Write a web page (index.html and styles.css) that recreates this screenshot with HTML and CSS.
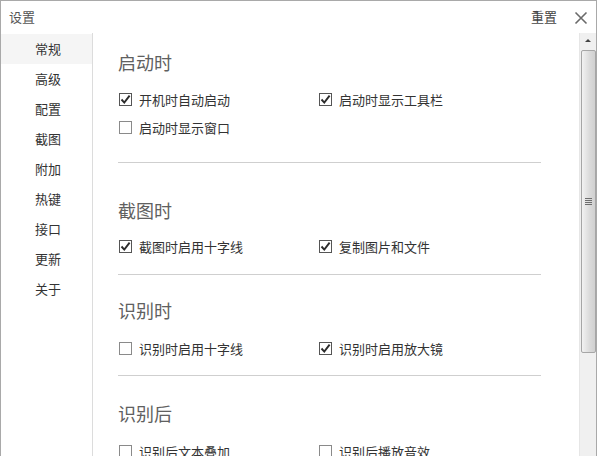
FILE: index.html
```html
<!DOCTYPE html>
<html lang="zh">
<head>
<meta charset="utf-8">
<title>设置</title>
<link rel="stylesheet" href="styles.css">
</head>
<body>
<div class="window">
  <header class="titlebar">
    <span class="title">设置</span>
    <div class="actions">
      <span class="reset">重置</span>
      <svg class="close" width="14" height="14" viewBox="0 0 14 14"><path d="M1.5 1.5L12.5 12.5M12.5 1.5L1.5 12.5" stroke="#6a6a6a" stroke-width="1.6" fill="none"/></svg>
    </div>
  </header>
  <div class="main">
    <nav class="sidebar">
      <div class="nav-item active">常规</div>
      <div class="nav-item">高级</div>
      <div class="nav-item">配置</div>
      <div class="nav-item">截图</div>
      <div class="nav-item">附加</div>
      <div class="nav-item">热键</div>
      <div class="nav-item">接口</div>
      <div class="nav-item">更新</div>
      <div class="nav-item">关于</div>
    </nav>
    <div class="content">
      <section class="section s1">
        <h2 class="sec-title">启动时</h2>
        <div class="opts">
          <label class="opt"><span class="box checked"><svg width="11" height="11" viewBox="0 0 11 11"><path d="M1.5 5.5L4.3 8.6L9.6 1.6" stroke="#2b2b2b" stroke-width="1.9" fill="none"/></svg></span>开机时自动启动</label>
          <label class="opt"><span class="box checked"><svg width="11" height="11" viewBox="0 0 11 11"><path d="M1.5 5.5L4.3 8.6L9.6 1.6" stroke="#2b2b2b" stroke-width="1.9" fill="none"/></svg></span>启动时显示工具栏</label>
          <label class="opt"><span class="box"></span>启动时显示窗口</label>
        </div>
      </section>
      <hr class="divider d1">
      <section class="section s2">
        <h2 class="sec-title">截图时</h2>
        <div class="opts">
          <label class="opt"><span class="box checked"><svg width="11" height="11" viewBox="0 0 11 11"><path d="M1.5 5.5L4.3 8.6L9.6 1.6" stroke="#2b2b2b" stroke-width="1.9" fill="none"/></svg></span>截图时启用十字线</label>
          <label class="opt"><span class="box checked"><svg width="11" height="11" viewBox="0 0 11 11"><path d="M1.5 5.5L4.3 8.6L9.6 1.6" stroke="#2b2b2b" stroke-width="1.9" fill="none"/></svg></span>复制图片和文件</label>
        </div>
      </section>
      <hr class="divider d2">
      <section class="section s3">
        <h2 class="sec-title">识别时</h2>
        <div class="opts">
          <label class="opt"><span class="box"></span>识别时启用十字线</label>
          <label class="opt"><span class="box checked"><svg width="11" height="11" viewBox="0 0 11 11"><path d="M1.5 5.5L4.3 8.6L9.6 1.6" stroke="#2b2b2b" stroke-width="1.9" fill="none"/></svg></span>识别时启用放大镜</label>
        </div>
      </section>
      <hr class="divider d3">
      <section class="section s4">
        <h2 class="sec-title">识别后</h2>
        <div class="opts">
          <label class="opt"><span class="box"></span>识别后文本叠加</label>
          <label class="opt"><span class="box"></span>识别后播放音效</label>
        </div>
      </section>
    </div>
    <div class="scrollbar">
      <div class="arrow up"></div>
      <div class="thumb"><div class="grip"><i></i><i></i><i></i><i></i></div></div>
      <div class="track"></div>
      <div class="arrow down"></div>
    </div>
  </div>
</div>
</body>
</html>
```
FILE: styles.css
```css
* { box-sizing: border-box; }
html, body { margin: 0; padding: 0; background: #fff; }
body {
  font-family: "Noto Sans CJK SC", "Noto Sans", sans-serif;
  color: #333;
  overflow: hidden;
}
.window {
  width: 597px;
  height: 470px;
  border: 1px solid #a9a9a9;
  display: flex;
  flex-direction: column;
  background: #fff;
}
.titlebar {
  height: 32px;
  flex: 0 0 32px;
  display: flex;
  align-items: center;
  justify-content: space-between;
  padding: 0 8px 0 8px;
}
.title { font-size: 13px; color: #555; line-height: 16px; }
.actions { display: flex; align-items: center; gap: 17px; }
.reset { font-size: 13px; color: #444; line-height: 16px; }
.close { display: block; margin-top: 1px; }
.main { flex: 1; display: flex; min-height: 0; }
.sidebar {
  width: 92px;
  flex: 0 0 92px;
  border-right: 1px solid #dcdcdc;
  padding-top: 1px;
}
.nav-item {
  height: 30px;
  line-height: 30px;
  text-align: center;
  font-size: 13px;
  color: #333;
  padding-left: 3px;
}
.nav-item.active { background: #f5f5f5; }
.content {
  flex: 1;
  padding: 0 38px 0 25px;
  overflow: hidden;
}
.section { }
.sec-title {
  margin: 0;
  font-size: 18px;
  font-weight: normal;
  line-height: 24px;
  height: 24px;
  color: #606060;
}
.opts {
  display: grid;
  grid-template-columns: 200px auto;
  grid-auto-rows: 28px;
}
.opt {
  display: flex;
  align-items: center;
  font-size: 13px;
  color: #333;
  padding-left: 1px;
}
.box {
  width: 13px;
  height: 13px;
  border: 1px solid #8a8a8a;
  margin-right: 7px;
  display: flex;
  align-items: center;
  justify-content: center;
  flex: 0 0 13px;
}
.box.checked { border-color: #555; }
.box svg { display: block; }
.divider { border: 0; border-top: 1px solid #cfcfcf; margin: 0; height: 0; }
.s1 { padding-top: 17px; }
.s1 .opts { margin-top: 11px; }
.d1 { margin-top: 21px; }
.s2 { padding-top: 35px; }
.s2 .opts { margin-top: 10px; }
.d2 { margin-top: 14px; }
.s3 { padding-top: 23px; }
.s3 .opts { margin-top: 12px; }
.d3 { margin-top: 13px; }
.s4 { padding-top: 25px; }
.s4 .opts { margin-top: 12px; }
.scrollbar {
  width: 17px;
  flex: 0 0 17px;
  background: #f0f0f0;
  border-left: 1px solid #e6e6e6;
  display: flex;
  flex-direction: column;
  align-items: center;
}
.arrow { height: 17px; flex: 0 0 17px; width: 100%; position: relative; }
.arrow::after {
  content: "";
  position: absolute;
  left: 50%;
  margin-left: -3px;
  border-left: 3px solid transparent;
  border-right: 3px solid transparent;
}
.arrow.up::after { top: 6px; border-bottom: 3px solid #444; }
.arrow.down::after { bottom: 8px; border-top: 3px solid #444; }
.thumb {
  width: 15px;
  height: 303px;
  border: 1px solid #a6a6a6;
  border-radius: 2px;
  background: linear-gradient(to right, #f2f2f2, #dadada 60%, #d0d0d0);
  display: flex;
  align-items: center;
  justify-content: center;
}
.grip { display: flex; flex-direction: column; gap: 1px; }
.grip i { display: block; width: 7px; height: 1px; background: #6e6e6e; }
.track { flex: 1; }
```
